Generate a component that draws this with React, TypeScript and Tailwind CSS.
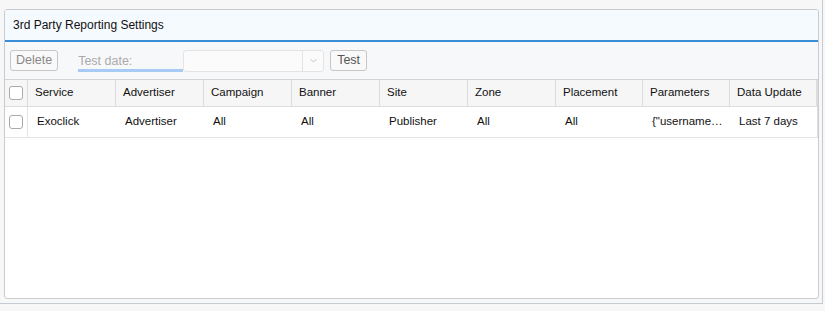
const columns = [
  { name: "Service", w: "w-[88px]" },
  { name: "Advertiser", w: "w-[88px]" },
  { name: "Campaign", w: "w-[88px]" },
  { name: "Banner", w: "w-[88px]" },
  { name: "Site", w: "w-[88px]" },
  { name: "Zone", w: "w-[88px]" },
  { name: "Placement", w: "w-[87px]" },
  { name: "Parameters", w: "w-[87px]" },
  { name: "Data Update", w: "w-[87px]" },
];

const rows = [
  ["Exoclick", "Advertiser", "All", "All", "Publisher", "All", "All", '{"username…', "Last 7 days"],
];

function Checkbox() {
  return <div className="w-[14px] h-[14px] rounded-[3px] border border-[#a9a9a9] bg-white" />;
}

export default function App() {
  return (
    <div className="w-[825px] h-[311px] bg-[#f7f7f7] font-['Liberation_Sans',Arial,sans-serif] text-[#111]">
      <div className="w-[823px] h-[304px] border-r border-b border-[#c5cbd3] bg-[#f7f7f7] pt-[9px] pl-[4px]">
        <div className="w-[815px] h-[290px] border border-[#c8ccd1] rounded-[3px] bg-white flex flex-col overflow-hidden">
          <div className="h-[32px] shrink-0 bg-[#f5faff] border-b-2 border-[#3a8ed8] flex items-center pl-[8px] text-[12px]">
            3rd Party Reporting Settings
          </div>
          <div className="h-[38px] shrink-0 bg-[#f7f8fa] flex items-center pl-[5px] border-b border-[#d4d4d4]">
            <button className="h-[21px] px-[5px] border border-[#c6c6c6] rounded-[3px] text-[12.5px] text-[#888] bg-[#f9f9f9]">
              Delete
            </button>
            <div className="ml-[20px] w-[105px] h-[22px] relative text-[12.5px] text-[#aaa] pt-[2px]">
              Test date:
              <div className="absolute left-0 right-0 bottom-0 h-[3px] bg-[#a7cbf5]" />
            </div>
            <div className="w-[141px] h-[22px] border border-[#e4e4e4] rounded-[3px] bg-[#fbfbfb] flex">
              <div className="flex-1" />
              <div className="w-[21px] border-l border-[#e4e4e4] flex items-center justify-center">
                <svg width="7" height="5" viewBox="0 0 7 5" fill="none">
                  <path d="M0.5 1 L3.5 4 L6.5 1" stroke="#c4c4c4" strokeWidth="1" />
                </svg>
              </div>
            </div>
            <button className="ml-[6px] h-[21px] w-[37px] border border-[#c6c6c6] rounded-[3px] text-[12.5px] text-[#555] bg-[#f9f9f9]">
              Test
            </button>
          </div>
          <div className="flex-1 flex">
            <div className="w-[812px]">
              <div className="flex h-[27px] bg-[#f6f6f6] border-b border-[#dcdcdc] text-[11.5px]">
                <div className="w-[23px] flex items-center justify-center border-r border-[#dcdcdc]">
                  <Checkbox />
                </div>
                {columns.map((c) => (
                  <div key={c.name} className={`${c.w} flex items-center pl-[7px] border-r border-[#dcdcdc]`}>
                    {c.name}
                  </div>
                ))}
              </div>
              {rows.map((r, i) => (
                <div key={i} className="flex h-[31px] bg-white border-b border-[#e4e4e4] text-[11.5px]">
                  <div className="w-[23px] flex items-center justify-center border-r border-[#e4e4e4]">
                    <Checkbox />
                  </div>
                  {r.map((v, j) => (
                    <div key={j} className={`${columns[j].w} flex items-center pl-[9px]`}>
                      {v}
                    </div>
                  ))}
                </div>
              ))}
            </div>
            <div className="w-[2px] bg-[#dcdcdc] h-[58px]" />
          </div>
        </div>
      </div>
    </div>
  );
}
